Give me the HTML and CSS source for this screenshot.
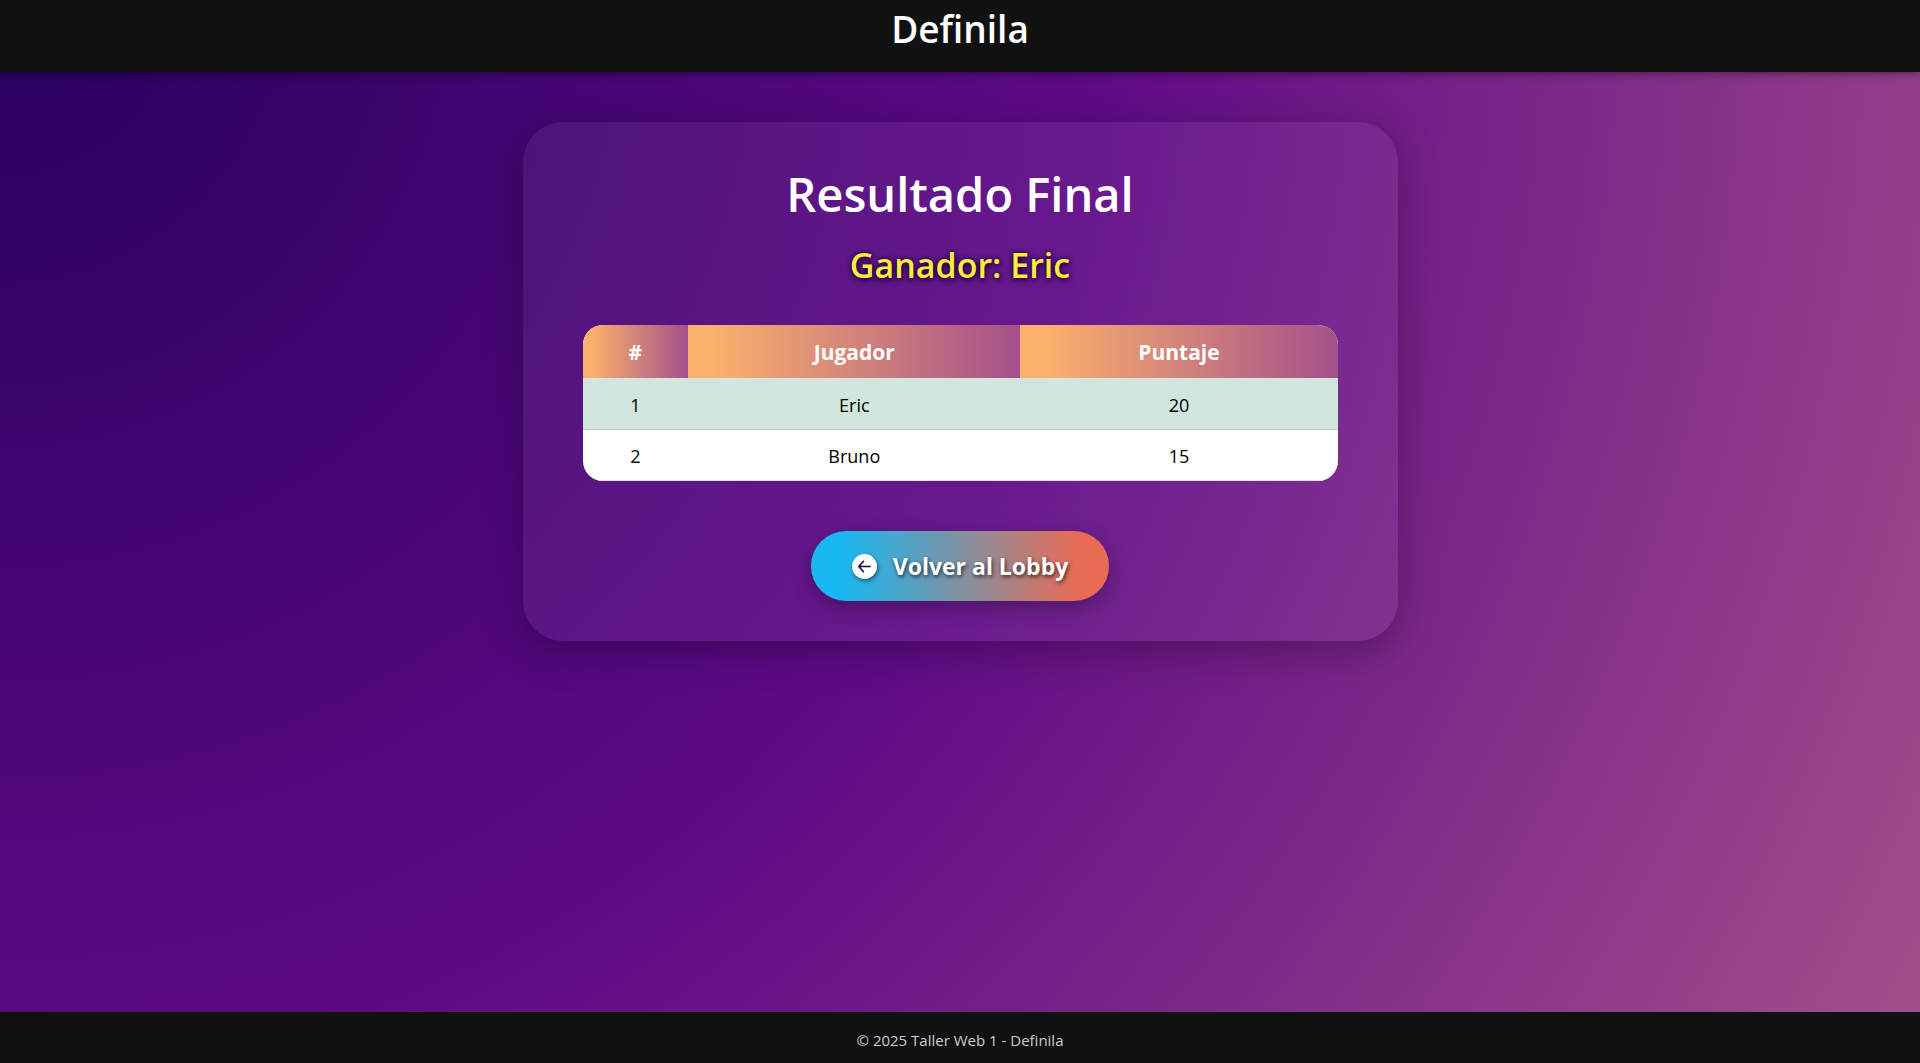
FILE: index.html
```html
<!DOCTYPE html>
<html lang="es">
<head>
    <meta charset="UTF-8">
    <meta name="viewport" content="width=device-width, initial-scale=1.0">
    <title>Definila - Resultado Final</title>
    <link rel="stylesheet" href="styles.css">
</head>
<body>
    <header class="header">
        <h1>Definila</h1>
    </header>

    <main class="main">
        <section class="card">
            <h2 class="titulo">Resultado Final</h2>
            <p class="ganador">Ganador: Eric</p>

            <table class="tabla">
                <thead>
                    <tr>
                        <th class="col-pos">#</th>
                        <th>Jugador</th>
                        <th class="col-puntaje">Puntaje</th>
                    </tr>
                </thead>
                <tbody>
                    <tr class="primero">
                        <td>1</td>
                        <td>Eric</td>
                        <td>20</td>
                    </tr>
                    <tr>
                        <td>2</td>
                        <td>Bruno</td>
                        <td>15</td>
                    </tr>
                </tbody>
            </table>

            <a href="#" class="btn-volver">
                <svg class="icono" viewBox="0 0 24 24" aria-hidden="true">
                    <circle cx="12" cy="12" r="12" fill="#fff"/>
                    <path d="M17.5 12H6.5M11 7L6.5 12l4.5 5" fill="none" stroke="#1a0050" stroke-width="1.5" stroke-linecap="round" stroke-linejoin="round"/>
                </svg>
                <span>Volver al Lobby</span>
            </a>
        </section>
    </main>

    <footer class="footer">
        <p>© 2025 Taller Web 1 - Definila</p>
    </footer>
</body>
</html>
```

FILE: styles.css
```css
* {
    margin: 0;
    padding: 0;
    box-sizing: border-box;
}

body {
    font-family: 'Segoe UI', 'Open Sans', 'Noto Sans', sans-serif;
    line-height: 24px;
    color: #fff;
    background: radial-gradient(circle at top left, #28005e, #5f0a87, #a4508b);
    min-height: 100vh;
    display: flex;
    flex-direction: column;
}

.header {
    background: #111;
    text-align: center;
    padding: 5px 16px 19px;
    box-shadow: 0 2px 8px rgba(0, 0, 0, 0.4);
}

.header h1 {
    font-size: 37px;
    font-weight: 600;
    line-height: 48px;
}

.main {
    flex: 1;
    padding: 50px 16px;
}

.card {
    max-width: 875px;
    margin: 0 auto;
    padding: 40px 60px;
    text-align: center;
    background: rgba(255, 255, 255, 0.06);
    border-radius: 40px;
    box-shadow: 0 10px 40px rgba(0, 0, 0, 0.3);
}

.titulo {
    font-size: 47px;
    font-weight: 600;
    line-height: 64px;
    margin-bottom: 15px;
}

.ganador {
    font-size: 34px;
    font-weight: 600;
    line-height: 48px;
    color: #ffeb3b;
    text-shadow: 1px 2px 6px #1a0040, 0 0 4px #1a0040;
    margin-bottom: 36px;
}

.tabla {
    width: 100%;
    table-layout: fixed;
    border-collapse: separate;
    border-spacing: 0;
    border-radius: 20px;
    overflow: hidden;
    background: #fff;
    color: #000;
    font-size: 18px;
    margin-bottom: 50px;
}

.tabla th {
    background: linear-gradient(90deg, #fbb06c 8%, #a4508b);
    color: #fff;
    font-size: 21px;
    font-weight: 700;
    padding: 15px 16px 14px;
    border-bottom: 1px solid #dee2e6;
}

.tabla td {
    padding: 14px 16px 12px;
    border-bottom: 1px solid #dee2e6;
}

.tabla .primero td {
    background: #d1e7dd;
    border-bottom-color: #bcd0c7;
}

.col-pos {
    width: 14%;
}

.col-puntaje {
    width: 42%;
}

.btn-volver {
    display: inline-flex;
    align-items: center;
    gap: 16px;
    padding: 19px 41px;
    border-radius: 35px;
    background: linear-gradient(90deg, #18b9f2 10%, #ea6b55 90%);
    color: #fff;
    font-size: 23px;
    font-weight: 700;
    line-height: 32px;
    text-decoration: none;
    text-shadow: 1px 2px 4px rgba(0, 0, 0, 0.7);
    box-shadow: 0 6px 20px rgba(0, 0, 0, 0.3);
}

.icono {
    width: 25px;
    height: 25px;
    filter: drop-shadow(1px 2px 2px rgba(0, 0, 0, 0.5));
}

.footer {
    background: #111;
    color: #ccc;
    text-align: center;
    font-size: 15px;
    padding: 16px 16px 11px;
}
```
